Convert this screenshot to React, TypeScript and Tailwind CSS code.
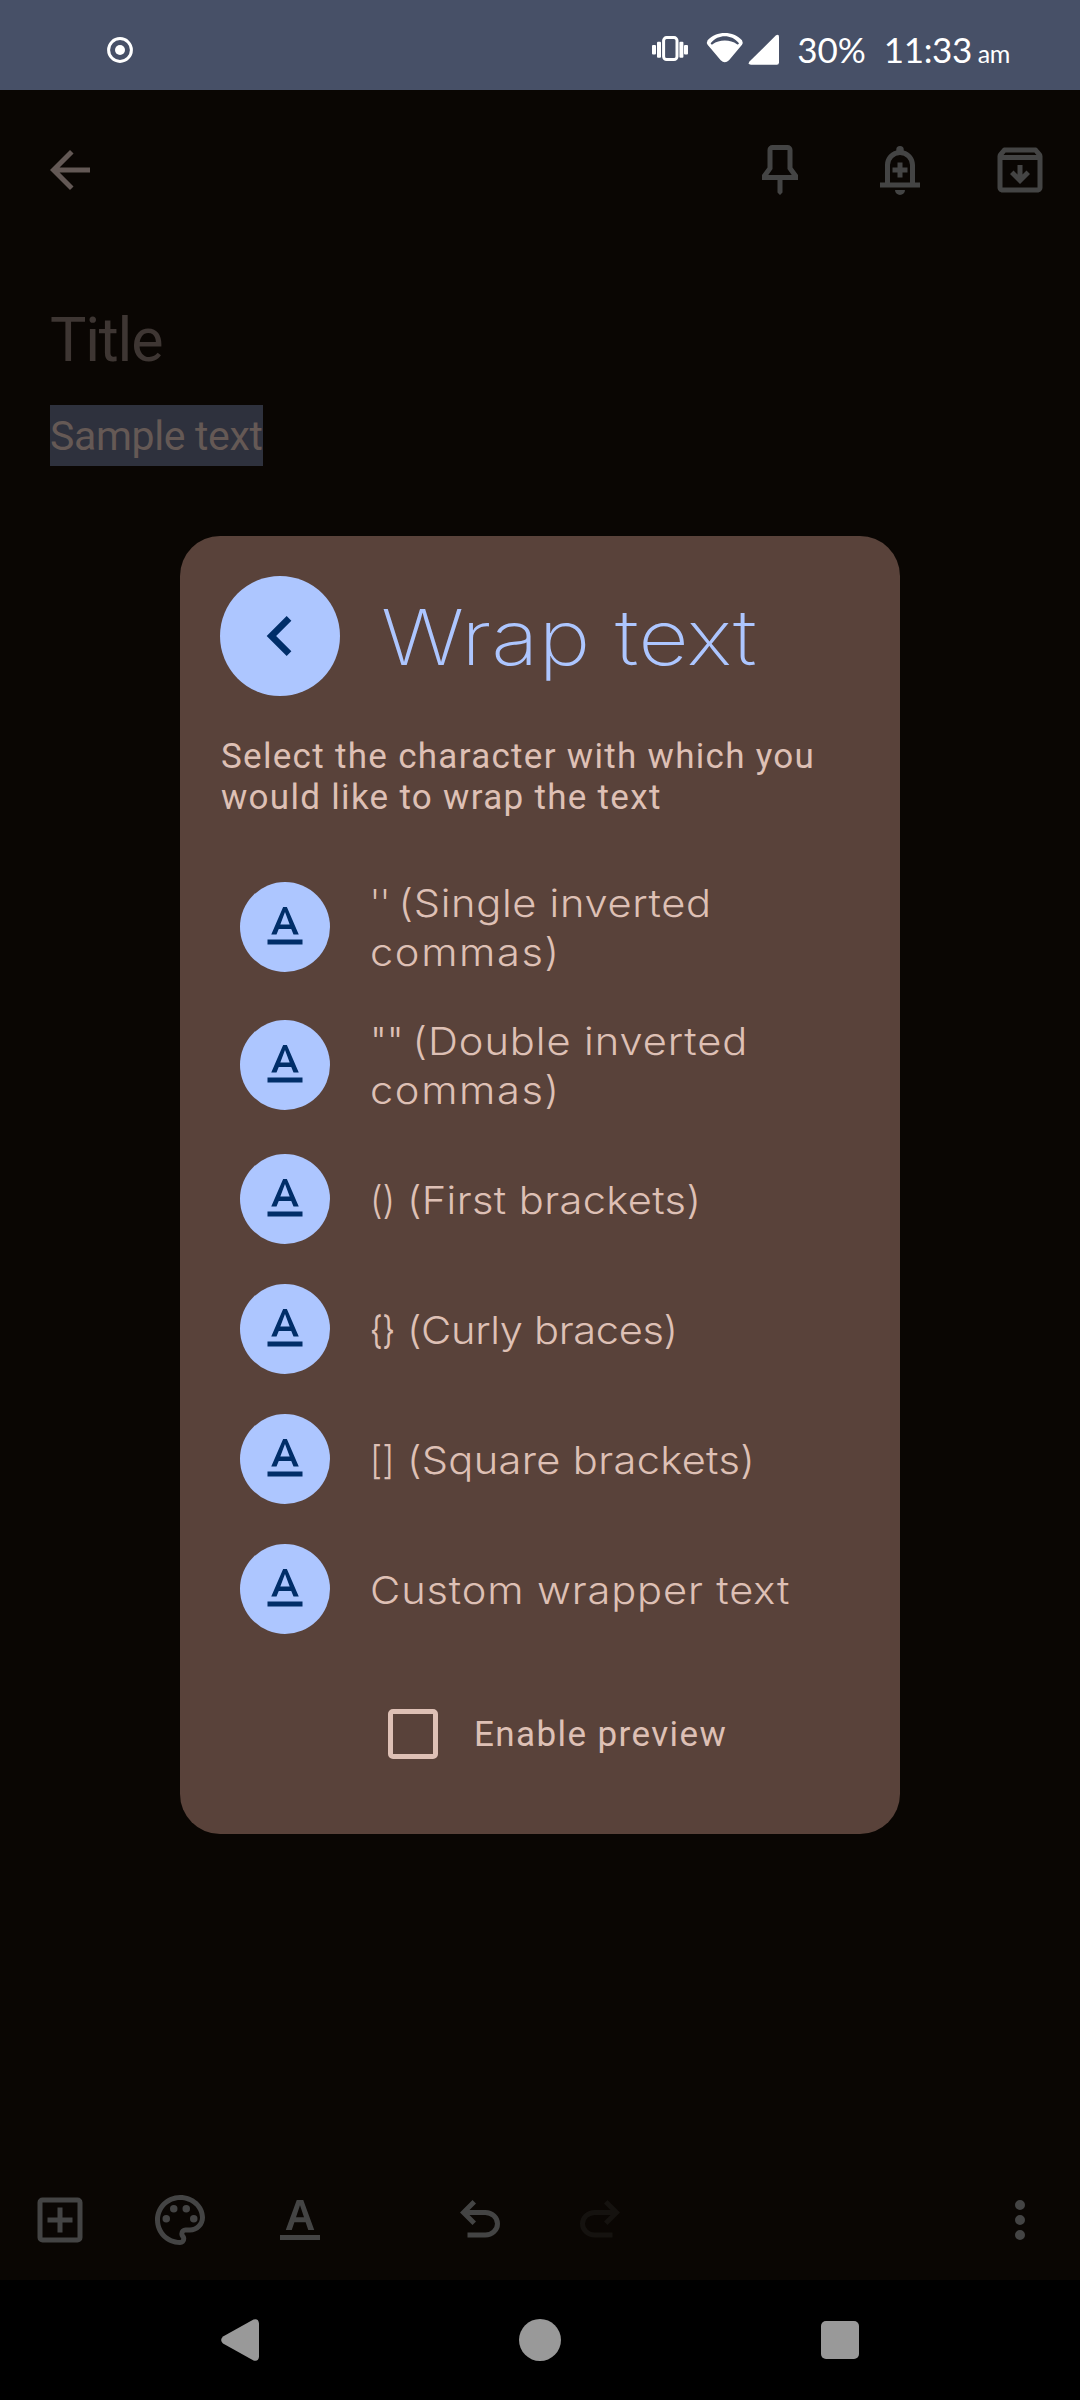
import React, { ReactNode } from "react";

type IconProps = { d: string; className?: string };

function Icon({ d, className = "size-[60px]" }: IconProps) {
  return (
    <svg viewBox="0 0 24 24" fill="currentColor" className={className} aria-hidden="true">
      <path fillRule="evenodd" d={d} />
    </svg>
  );
}

const icons = {
  back: "M20 11H7.83l5.59-5.59L12 4l-8 8 8 8 1.41-1.41L7.83 13H20z",
  pin: "M9 2h6a2 2 0 0 1 2 2v7l2.2 3v2H13v5l-1 1-1-1v-5H4.8v-2L7 11V4a2 2 0 0 1 2-2zM9 4v7.6L7.3 14h9.4L15 11.6V4z",
  reminder:
    "M4 19v-2h2v-7c0-2.78 1.9-5.1 4.5-5.8V3.9a1.5 1.5 0 0 1 3 0v.3c2.6.7 4.5 3.02 4.5 5.8v7h2v2zM8 17h8v-7a4 4 0 0 0-8 0zM12 22a2 2 0 0 1-2-2h4a2 2 0 0 1-2 2zM11 15v-2H9v-2h2V9h2v2h2v2h-2v2z",
  archive:
    "M20.54 5.23l-1.39-1.68C18.88 3.21 18.47 3 18 3H6c-.47 0-.88.21-1.16.55L3.46 5.23C3.17 5.57 3 6.02 3 6.5V19c0 1.1.9 2 2 2h14c1.1 0 2-.9 2-2V6.5c0-.48-.17-.93-.46-1.27zM6.24 5h11.52l.83 1H5.42zM5 19V8h14v11zM12 17.6l4-4-1.4-1.4-1.6 1.6V10h-2v3.8l-1.6-1.6L8 13.6z",
  addBox:
    "M19 3H5a2 2 0 0 0-2 2v14a2 2 0 0 0 2 2h14a2 2 0 0 0 2-2V5a2 2 0 0 0-2-2zm0 16H5V5h14zM11 17h2v-4h4v-2h-4V7h-2v4H7v2h4z",
  palette:
    "M12 22C6.49 22 2 17.51 2 12S6.49 2 12 2s10 4.04 10 9c0 3.31-2.69 6-6 6h-1.77c-.28 0-.5.22-.5.5 0 .12.05.23.13.33.41.47.64 1.06.64 1.67A2.5 2.5 0 0 1 12 22zm0-18c-4.41 0-8 3.59-8 8s3.59 8 8 8c.28 0 .5-.22.5-.5a.54.54 0 0 0-.14-.35c-.41-.46-.63-1.05-.63-1.65a2.5 2.5 0 0 1 2.5-2.5H16c2.21 0 4-1.79 4-4 0-3.86-3.59-7-8-7zM5 11.5a1.5 1.5 0 1 0 3 0 1.5 1.5 0 1 0-3 0zM8 7.5a1.5 1.5 0 1 0 3 0 1.5 1.5 0 1 0-3 0zM13 7.5a1.5 1.5 0 1 0 3 0 1.5 1.5 0 1 0-3 0zM16 11.5a1.5 1.5 0 1 0 3 0 1.5 1.5 0 1 0-3 0z",
  textColor:
    "M4 18h16v2H4zM10.7 4h2.6l4.4 12h-2.4l-1.05-3.1h-4.5L8.7 16H6.3zM10.4 10.9h3.2L12 6.1z",
  undo: "M7 19v-2h7.1q1.575 0 2.738-1T18 13.5 16.838 11 14.1 10H7.8l2.6 2.6L9 14 4 9l5-5 1.4 1.4L7.8 8h6.3q2.425 0 4.163 1.575T20 13.5t-1.737 3.925T14.1 19z",
  more: "M10 6a2 2 0 1 0 4 0 2 2 0 1 0-4 0zM10 12a2 2 0 1 0 4 0 2 2 0 1 0-4 0zM10 18a2 2 0 1 0 4 0 2 2 0 1 0-4 0z",
  chevron: "M15.41 7.41 14 6l-6 6 6 6 1.41-1.41L10.83 12z",
  textFormat:
    "M5 17v2h14v-2H5zm4.5-4.2h5l.9 2.2h2.1L12.75 4h-1.5L6.5 15h2.1l.9-2.2zM12 5.98 13.87 11h-3.74L12 5.98z",
};

function StatusBar() {
  return (
    <header className="flex h-[90px] items-center bg-[#475067] pr-[70px] pl-[107px] font-['Lato',sans-serif] text-white">
      <svg viewBox="0 0 26 26" className="mt-[10px] size-[26px]" aria-hidden="true">
        <circle cx="13" cy="13" r="11.4" fill="none" stroke="currentColor" strokeWidth="3" />
        <circle cx="13" cy="13" r="5" fill="currentColor" />
      </svg>
      <svg viewBox="0 0 128 34" className="mt-[8px] ml-auto h-[34px] w-[128px]" fill="currentColor" aria-hidden="true">
        <rect x="11.6" y="5.6" width="13.4" height="22" rx="3" fill="none" stroke="currentColor" strokeWidth="3" />
        <rect x="0" y="13" width="4" height="9.4" rx="1" />
        <rect x="5" y="9.7" width="4" height="16" rx="1" />
        <rect x="27.4" y="9.7" width="4" height="16" rx="1" />
        <rect x="32" y="13" width="4" height="9.4" rx="1" />
        <path
          fillRule="evenodd"
          d="M55.6 8.2C60.5 3.3 66 1 72.8 1S85.2 3.3 90 8.2q1.3 2.3 0 4.5L77 28.2q-4.2 4-8.3 0L55.6 12.7q-1.4-2.2 0-4.5zM58.6 11.2q1.2 2.3 2 1 5.2-3.7 12.2-3.7t12.2 3.7q.9 1.2 2-1C82.5 6.3 78 4.3 72.8 4.3S63 6.3 58.6 11.2z"
        />
        <path d="M124 3.3q3-1.8 3 1.5V30.5q0 2.2-2.2 2.2H99q-3.6-.3-1.5-3.2z" />
      </svg>
      <span className="mt-[8px] ml-[17px] text-[35px] leading-none">30%</span>
      <span className="mt-[8px] ml-[18px] text-[35px] leading-none tracking-[-0.4px]">
        11:33<span className="text-[25px]"> am</span>
      </span>
    </header>
  );
}

function AppBar() {
  return (
    <nav className="flex h-[160px] items-center pr-[30px] pl-10 text-[#444444]">
      <Icon d={icons.back} className="size-[60px] text-[#635855]" />
      <div className="ml-auto flex gap-[60px]">
        <Icon d={icons.pin} />
        <Icon d={icons.reminder} />
        <Icon d={icons.archive} />
      </div>
    </nav>
  );
}

function Note() {
  return (
    <section className="flex flex-col items-start px-[50px] pt-[54px] font-['Roboto',sans-serif]">
      <h1 className="text-[61px] leading-[72px] tracking-[-1.2px] text-[#3e3633]">Title</h1>
      <p className="mt-[29px] h-[61px] bg-[#2e313d] text-[41px] leading-[63px] tracking-[-0.35px] text-[#655955]">
        Sample text
      </p>
    </section>
  );
}

type OptionProps = { children: ReactNode };

function OptionRow({ children }: OptionProps) {
  return (
    <li className="flex items-center gap-10 py-5">
      <span className="flex size-[90px] shrink-0 items-center justify-center rounded-full bg-[#adc6ff] text-[#002e69]">
        <Icon d={icons.textFormat} />
      </span>
      <div className="flex origin-left translate-y-px scale-x-[1.08] flex-col text-[38.5px] leading-[49px] font-light whitespace-nowrap">
        {children}
      </div>
    </li>
  );
}

function WrapDialog() {
  return (
    <section
      role="dialog"
      className="absolute top-[536px] left-[180px] flex h-[1298px] w-[720px] flex-col rounded-[40px] bg-[#59423a] p-10 text-[#dec0b5]"
    >
      <div className="flex items-center gap-[41px]">
        <button className="flex size-[120px] items-center justify-center rounded-full bg-[#adc6ff] text-[#002e69]">
          <Icon d={icons.chevron} className="size-20" />
        </button>
        <h2 className="origin-left translate-y-px scale-x-[1.14] font-['Inter',sans-serif] text-[77px] leading-none font-extralight whitespace-nowrap text-[#adc6ff]">
          Wrap text
        </h2>
      </div>
      <p className="mt-10 pl-px font-['Roboto',sans-serif] text-[35px] leading-[41px] tracking-[1.3px] whitespace-nowrap">
        Select the character with which you
        <br />
        would like to wrap the text
      </p>
      <ul className="mt-10 pl-5 font-['Inter',sans-serif]">
        <OptionRow>
          <span className="flex">
            <span className="w-[26.4px] origin-left scale-x-[0.82]">''</span>
            <span className="tracking-[0.64px]">(Single inverted</span>
          </span>
          <span className="tracking-[1.5px]">commas)</span>
        </OptionRow>
        <OptionRow>
          <span className="flex">
            <span className="w-[39.4px] origin-left scale-x-[0.92]">""</span>
            <span className="tracking-[0.87px]">(Double inverted</span>
          </span>
          <span className="tracking-[1.5px]">commas)</span>
        </OptionRow>
        <OptionRow>
          <span className="flex">
            <span className="w-[34.2px] origin-left scale-x-[0.87]">()</span>
            <span className="tracking-[0.35px]">(First brackets)</span>
          </span>
        </OptionRow>
        <OptionRow>
          <span className="flex">
            <span className="w-[34.2px] origin-left scale-x-[0.7] font-normal">{"{}"}</span>
            <span className="tracking-[-0.3px]">(Curly braces)</span>
          </span>
        </OptionRow>
        <OptionRow>
          <span className="flex">
            <span className="w-[34.2px] origin-left scale-x-[0.84]">[]</span>
            <span className="tracking-[0.32px]">(Square brackets)</span>
          </span>
        </OptionRow>
        <OptionRow>
          <span className="tracking-[0.8px]">Custom wrapper text</span>
        </OptionRow>
      </ul>
      <label className="mt-[55px] flex items-center gap-9 pl-[168px] font-['Roboto',sans-serif] text-[35px] leading-[41px] tracking-[1.4px]">
        <span className="size-[50px] rounded-[5px] border-[5px] border-[#dec0b5]" />
        Enable preview
      </label>
    </section>
  );
}

function Toolbar() {
  return (
    <div className="mt-auto flex h-[120px] items-center px-[30px] text-[#444444]">
      <div className="flex gap-[60px]">
        <Icon d={icons.addBox} />
        <Icon d={icons.palette} />
        <Icon d={icons.textColor} />
      </div>
      <div className="ml-[120px] flex gap-[60px]">
        <Icon d={icons.undo} />
        <Icon d={icons.undo} className="size-[60px] -scale-x-100 text-[#15120f]" />
      </div>
      <Icon d={icons.more} className="ml-auto size-[60px]" />
    </div>
  );
}

function SystemNav() {
  return (
    <footer className="grid h-[120px] grid-cols-[60px_60px_60px] items-center justify-between justify-items-center bg-black px-[210px] text-[#999999]">
      <svg viewBox="0 0 60 60" className="size-[60px]" fill="currentColor" aria-hidden="true">
        <path d="M49 13.5V46.5Q48.5 52 43.5 50.5L13 33.5Q9.3 30 13 26.5L43.5 9.5Q48.5 8 49 13.5z" />
      </svg>
      <span className="size-[42px] rounded-full bg-[#999999]" />
      <span className="size-[38px] rounded-[5px] bg-[#999999]" />
    </footer>
  );
}

export default function App() {
  return (
    <main className="relative flex h-[2400px] w-[1080px] flex-col overflow-hidden bg-[#0a0603]">
      <StatusBar />
      <AppBar />
      <Note />
      <Toolbar />
      <SystemNav />
      <WrapDialog />
    </main>
  );
}
